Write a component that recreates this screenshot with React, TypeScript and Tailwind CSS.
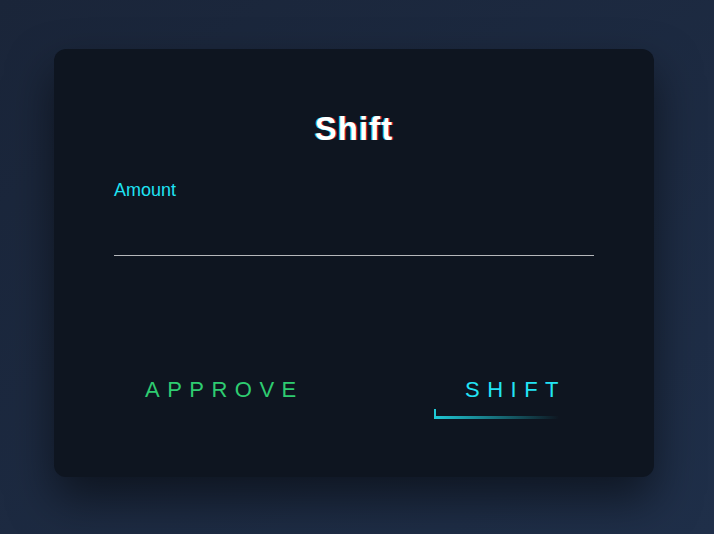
export default function App() {
  return (
    <div className="flex min-h-[534px] w-full items-center justify-center bg-gradient-to-br from-[#1a2539] to-[#1f2f49] font-['Liberation_Sans',Arial,sans-serif]">
      <div className="mr-[6px] mb-[8px] flex h-[428px] w-[600px] flex-col rounded-xl bg-[#0e1520] px-[60px] pt-[60px] shadow-[0_22px_45px_rgba(0,0,0,0.5)]">
        <h1 className="mt-[3px] text-center text-[33px] font-bold leading-none tracking-[1px] text-white [text-shadow:-1px_0_rgba(31,228,242,0.85),1px_0_rgba(224,16,42,0.85)]">
          Shift
        </h1>

        <label className="mt-[32px] text-[18px] leading-[27px] text-[#1ee3f3]">Amount</label>
        <input
          type="text"
          className="h-[52px] w-full border-b border-[#b5b7bb] bg-transparent text-white outline-none"
        />

        <div className="mt-[109px] flex justify-between">
          <button className="pl-[31px] pr-[31px] pt-[11px] pb-[15px] text-[22px] leading-7 tracking-[0.34em] text-[#2ecc71]">
            APPROVE
          </button>
          <button className="relative pl-[31px] pr-[28px] pt-[11px] pb-[15px] text-[22px] leading-7 tracking-[0.34em] text-[#22e4f5]">
            SHIFT
            <span className="absolute bottom-0 left-0 h-[10px] w-[2px] bg-[#1fc9d6]" />
            <span className="absolute bottom-0 left-0 h-[3px] w-[125px] bg-gradient-to-r from-[#1fc9d6] to-transparent" />
          </button>
        </div>
      </div>
    </div>
  );
}
